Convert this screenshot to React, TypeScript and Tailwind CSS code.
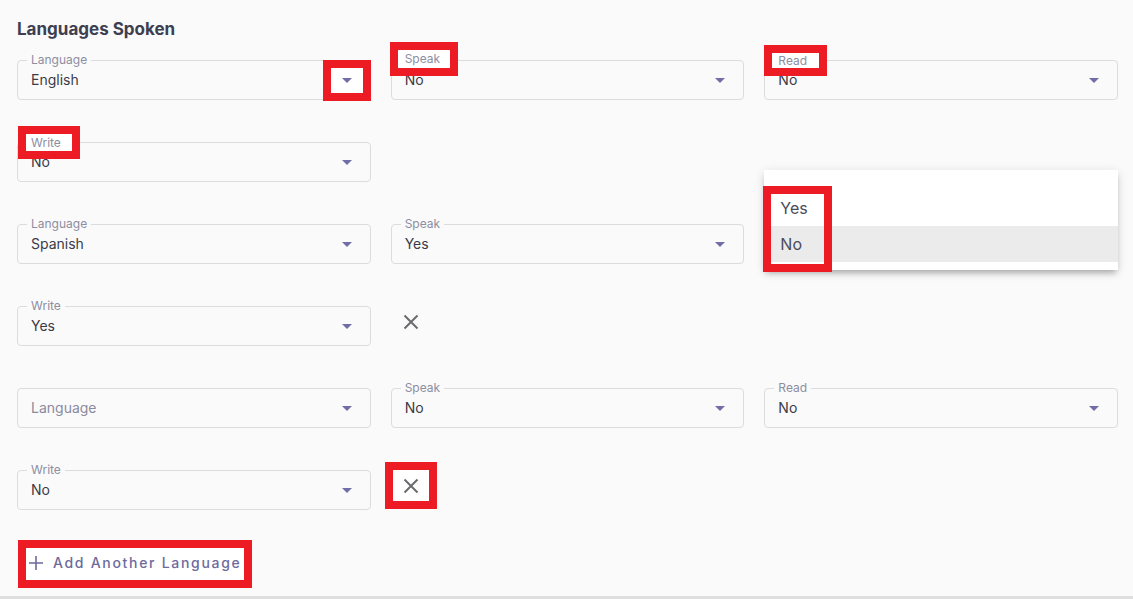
import React from 'react';

const RED = 'outline-8 outline-[#ed1c24] bg-white';

type FieldProps = {
  label?: string;
  value?: string;
  placeholder?: string;
  labelMark?: string;
  arrowMark?: boolean;
  children?: React.ReactNode;
};

function Caret() {
  return (
    <svg width="10" height="5" viewBox="0 0 10 5">
      <path d="M0 0h10L5 5z" fill="#716da7" />
    </svg>
  );
}

function SelectField({ label, value, placeholder, labelMark, arrowMark, children }: FieldProps) {
  return (
    <div className="relative h-10 rounded-[4px] border border-[#dcdcdf]">
      {label && (
        <span
          className={`absolute text-[12px] leading-[14px] text-[#8d8ea2] ${
            labelMark ? `${RED} ${labelMark}` : 'left-[9px] -top-[8px] px-1 bg-[#fafafa]'
          }`}
        >
          {label}
        </span>
      )}
      <div className="flex h-full items-center pb-[2px] pl-[13px] text-[14px]">
        {value ? (
          <span className="text-[#3a3a48]">{value}</span>
        ) : (
          <span className="text-[#8a8b9e]">{placeholder}</span>
        )}
      </div>
      <span
        className={`absolute right-[7px] top-[7px] flex h-[25px] w-8 items-center justify-center ${
          arrowMark ? RED : ''
        }`}
      >
        <Caret />
      </span>
      {children}
    </div>
  );
}

function RemoveButton({ marked }: { marked?: boolean }) {
  return (
    <button
      type="button"
      className={`ml-[2px] flex h-[31px] w-9 items-center justify-center ${marked ? RED : ''}`}
    >
      <svg width="16" height="16" viewBox="0 0 16 16">
        <path d="M1.5 1.5l13 13M14.5 1.5l-13 13" stroke="#6b6b6e" strokeWidth="2" />
      </svg>
    </button>
  );
}

// open select menu, sits over the Spanish "Read" field
function YesNoMenu() {
  return (
    <div className="absolute -left-px -right-px -top-[55px] z-10 bg-white pt-5 pb-2 shadow-[0_5px_6px_-2px_rgba(0,0,0,0.25),0_2px_10px_rgba(0,0,0,0.12)]">
      <div className="h-9 pl-4 text-[16px] leading-9 text-[#4a4a5a]">Yes</div>
      <div className="h-9 bg-[#ebebeb] pl-4 text-[16px] leading-9 text-[#4a4a5a]">No</div>
      <div className="pointer-events-none absolute -left-px top-4 h-[86px] w-[69px] border-8 border-[#ed1c24]" />
    </div>
  );
}

export default function App() {
  return (
    <div
      className="min-h-[599px] border-b-[3px] border-[#dedede] bg-[#fafafa] pl-[17px] pr-[15px] pt-[19px]"
      style={{ fontFamily: 'Inter, "Noto Sans", sans-serif' }}
    >
      <h2 className="text-[17px] font-bold leading-5 text-[#3d3f51]">Languages Spoken</h2>

      <div className="mt-[21px] flex flex-col gap-[42px]">
        {/* English */}
        <div className="grid grid-cols-3 gap-x-5 gap-y-[42px]">
          <SelectField label="Language" value="English" arrowMark />
          <SelectField label="Speak" value="No" labelMark="left-[6px] -top-[11px] h-[18px] pl-[7px] w-[52px] leading-[18px]" />
          <SelectField label="Read" value="No" labelMark="left-[7px] -top-[8px] h-[15px] pl-[6px] w-[47px] leading-[15px]" />
          <SelectField label="Write" value="No" labelMark="left-[8px] -top-[9px] h-[17px] pl-[5px] w-[46px] leading-[17px]" />
        </div>

        {/* Spanish */}
        <div className="grid grid-cols-3 gap-x-5 gap-y-[42px]">
          <SelectField label="Language" value="Spanish" />
          <SelectField label="Speak" value="Yes" />
          <SelectField>
            <YesNoMenu />
          </SelectField>
          <SelectField label="Write" value="Yes" />
          <RemoveButton />
        </div>

        {/* empty */}
        <div className="grid grid-cols-3 gap-x-5 gap-y-[42px]">
          <SelectField placeholder="Language" />
          <SelectField label="Speak" value="No" />
          <SelectField label="Read" value="No" />
          <SelectField label="Write" value="No" />
          <RemoveButton marked />
        </div>
      </div>

      <button
        type="button"
        className={`ml-[9px] mt-[38px] flex h-8 w-[218px] items-center gap-[10px] pb-[3px] pl-[3px] text-[14px] font-medium tracking-[1.7px] text-[#6d6a9c] ${RED}`}
      >
        <svg width="14" height="14" viewBox="0 0 14 14">
          <path d="M7 0v14M0 7h14" stroke="#6d6a9c" strokeWidth="1.6" />
        </svg>
        Add Another Language
      </button>
    </div>
  );
}
